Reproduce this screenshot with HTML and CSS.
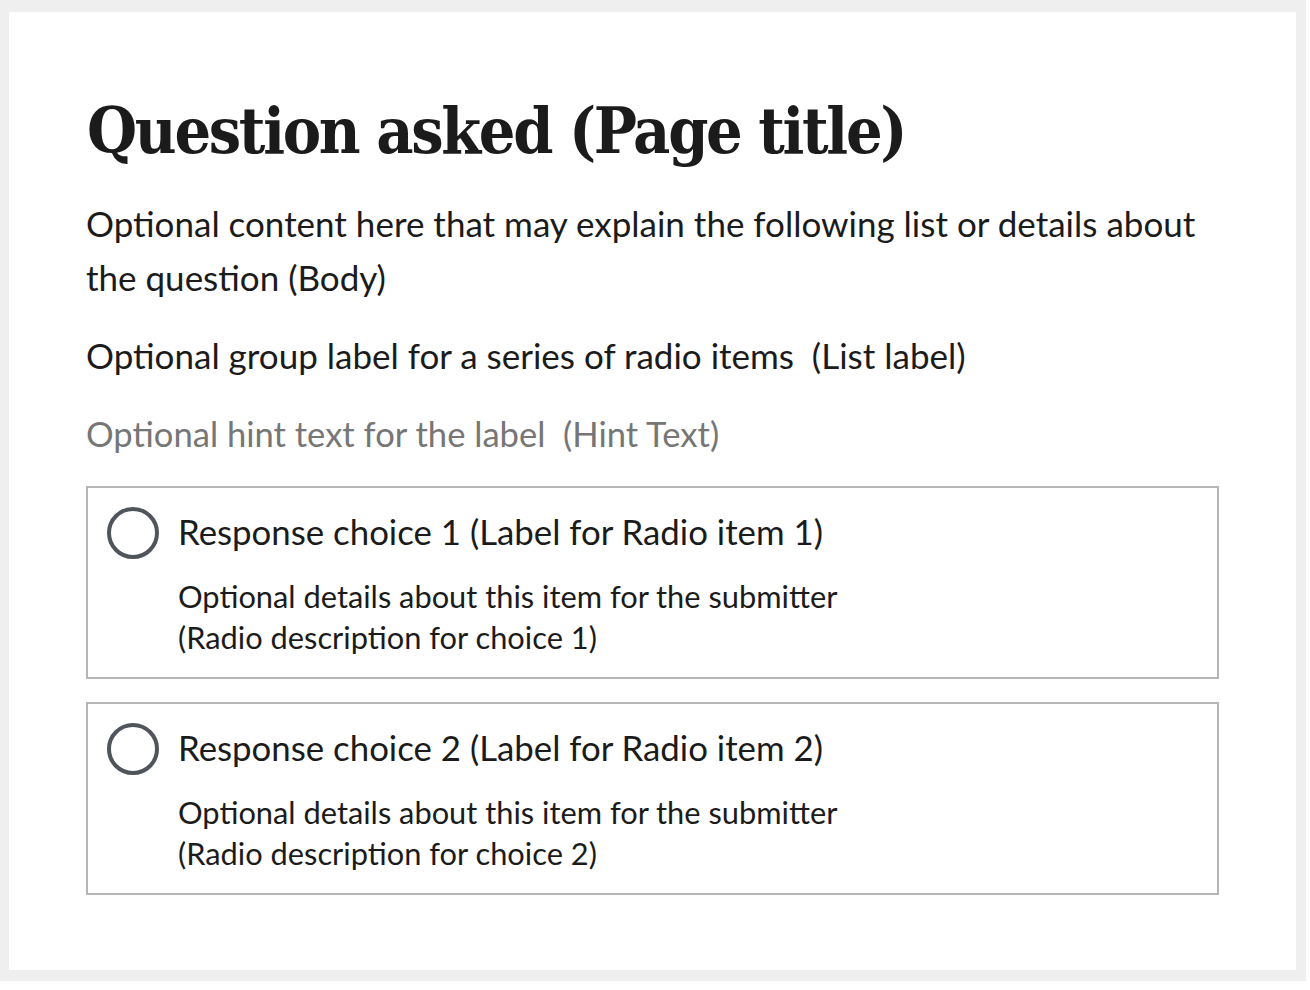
FILE: index.html
```html
<!DOCTYPE html>
<html lang="en">
<head>
<meta charset="utf-8">
<title>Radio question</title>
<link rel="stylesheet" href="styles.css">
</head>
<body>
<div class="frame">
  <main class="card">
    <h1 class="title">Question asked (Page title)</h1>
    <p class="body">Optional content here that may explain the following list or details about the question (Body)</p>
    <div class="group" role="radiogroup" aria-labelledby="list-label">
      <div class="legend" id="list-label">Optional group label for a series of radio items&nbsp; (List label)</div>
      <p class="hint">Optional hint text for the label&nbsp; (Hint Text)</p>
      <label class="option">
        <span class="radio"></span>
        <span class="option-text">
          <span class="option-label">Response choice 1 (Label for Radio item 1)</span>
          <span class="option-desc">Optional details about this item for the submitter<br>(Radio description for choice 1)</span>
        </span>
      </label>
      <label class="option">
        <span class="radio"></span>
        <span class="option-text">
          <span class="option-label">Response choice 2 (Label for Radio item 2)</span>
          <span class="option-desc">Optional details about this item for the submitter<br>(Radio description for choice 2)</span>
        </span>
      </label>
    </div>
  </main>
</div>
</body>
</html>
```
FILE: styles.css
```css
html, body {
  margin: 0;
  padding: 0;
  background: #ffffff;
}

.frame {
  box-sizing: border-box;
  width: 1306px;
  height: 981px;
  background: #efefef;
  padding: 12px 10px 11px 9px;
}

.card {
  box-sizing: border-box;
  height: 100%;
  background: #ffffff;
  padding: 79px 77px 0 77px;
  color: #1b1b1b;
  font-family: "Lato", "Liberation Sans", sans-serif;
}

.title {
  margin: 0;
  font-family: "DejaVu Serif", serif;
  font-stretch: condensed;
  font-weight: bold;
  font-size: 64px;
  line-height: 80px;
  letter-spacing: -2.3px;
  padding-left: 1px;
}

.body {
  margin: 25px 0 0;
  font-size: 35px;
  line-height: 54px;
}

.legend {
  margin-top: 24px;
  font-size: 35px;
  line-height: 54px;
}

.hint {
  margin: 25px 0 0;
  font-size: 34.6px;
  line-height: 54px;
  color: #767676;
}

.option {
  display: flex;
  gap: 19px;
  margin-top: 25px;
  border: 2px solid #b4b6b8;
  padding: 18px 18px 19px 19px;
}

.option + .option {
  margin-top: 23px;
}

.radio {
  flex: none;
  width: 52px;
  height: 52px;
  border: 4px solid #50555c;
  border-radius: 50%;
  box-sizing: border-box;
  margin-top: 1px;
}

.option-text {
  display: flex;
  flex-direction: column;
}

.option-label {
  font-size: 34.8px;
  line-height: 52px;
}

.option-desc {
  margin-top: 18px;
  font-size: 30.8px;
  line-height: 41px;
}
```
